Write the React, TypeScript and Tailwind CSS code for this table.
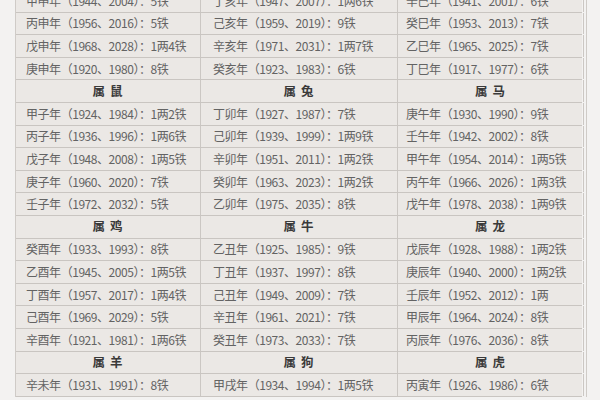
const rows: string[][] = [
  ['甲申年（1944、2004）：5铁', '丁亥年（1947、2007）：1两6铁', '辛巳年（1941、2001）：6铁'],
  ['丙申年（1956、2016）：5铁', '己亥年（1959、2019）：9铁', '癸巳年（1953、2013）：7铁'],
  ['戊申年（1968、2028）：1两4铁', '辛亥年（1971、2031）：1两7铁', '乙巳年（1965、2025）：7铁'],
  ['庚申年（1920、1980）：8铁', '癸亥年（1923、1983）：6铁', '丁巳年（1917、1977）：6铁'],
  ['#属 鼠', '#属 兔', '#属 马'],
  ['甲子年（1924、1984）：1两2铁', '丁卯年（1927、1987）：7铁', '庚午年（1930、1990）：9铁'],
  ['丙子年（1936、1996）：1两6铁', '己卯年（1939、1999）：1两9铁', '壬午年（1942、2002）：8铁'],
  ['戊子年（1948、2008）：1两5铁', '辛卯年（1951、2011）：1两2铁', '甲午年（1954、2014）：1两5铁'],
  ['庚子年（1960、2020）：7铁', '癸卯年（1963、2023）：1两2铁', '丙午年（1966、2026）：1两3铁'],
  ['壬子年（1972、2032）：5铁', '乙卯年（1975、2035）：8铁', '戊午年（1978、2038）：1两9铁'],
  ['#属 鸡', '#属 牛', '#属 龙'],
  ['癸酉年（1933、1993）：8铁', '乙丑年（1925、1985）：9铁', '戊辰年（1928、1988）：1两2铁'],
  ['乙酉年（1945、2005）：1两5铁', '丁丑年（1937、1997）：8铁', '庚辰年（1940、2000）：1两2铁'],
  ['丁酉年（1957、2017）：1两4铁', '己丑年（1949、2009）：7铁', '壬辰年（1952、2012）：1两'],
  ['己酉年（1969、2029）：5铁', '辛丑年（1961、2021）：7铁', '甲辰年（1964、2024）：8铁'],
  ['辛酉年（1921、1981）：1两6铁', '癸丑年（1973、2033）：7铁', '丙辰年（1976、2036）：8铁'],
  ['#属 羊', '#属 狗', '#属 虎'],
  ['辛未年（1931、1991）：8铁', '甲戌年（1934、1994）：1两5铁', '丙寅年（1926、1986）：6铁'],
];

const pads = ['pl-[10px]', 'pl-[12px]', 'pl-[8px]'];

export default function App() {
  return (
    <div
      className="w-[600px] h-[400px] overflow-hidden bg-[#f3f2f1]"
      style={{ fontFamily: '"Noto Sans CJK SC", "Liberation Sans", sans-serif' }}
    >
      <div className="ml-[15px] mt-[-10px] w-[572px] border-l border-r border-[#cfcbc7] pr-[4px]">
        {rows.map((row, i) => (
          <div
            key={i}
            className="grid grid-cols-[185px_197px_186px] h-[22.6px] border-b border-[#c9c5c1] bg-[#ebe8e5]"
          >
            {row.map((cell, j) => {
              const isHead = cell.startsWith('#');
              return (
                <div
                  key={j}
                  className={
                    'flex items-center border-r border-[#cbc7c3] ' +
                    (isHead
                      ? 'justify-center text-[12.5px] font-bold text-[#3a3a3a] tracking-[1px]'
                      : pads[j] + ' text-[12px] text-[#636363] tracking-[-0.45px]')
                  }
                >
                  {isHead ? cell.slice(1) : cell}
                </div>
              );
            })}
          </div>
        ))}
      </div>
    </div>
  );
}
